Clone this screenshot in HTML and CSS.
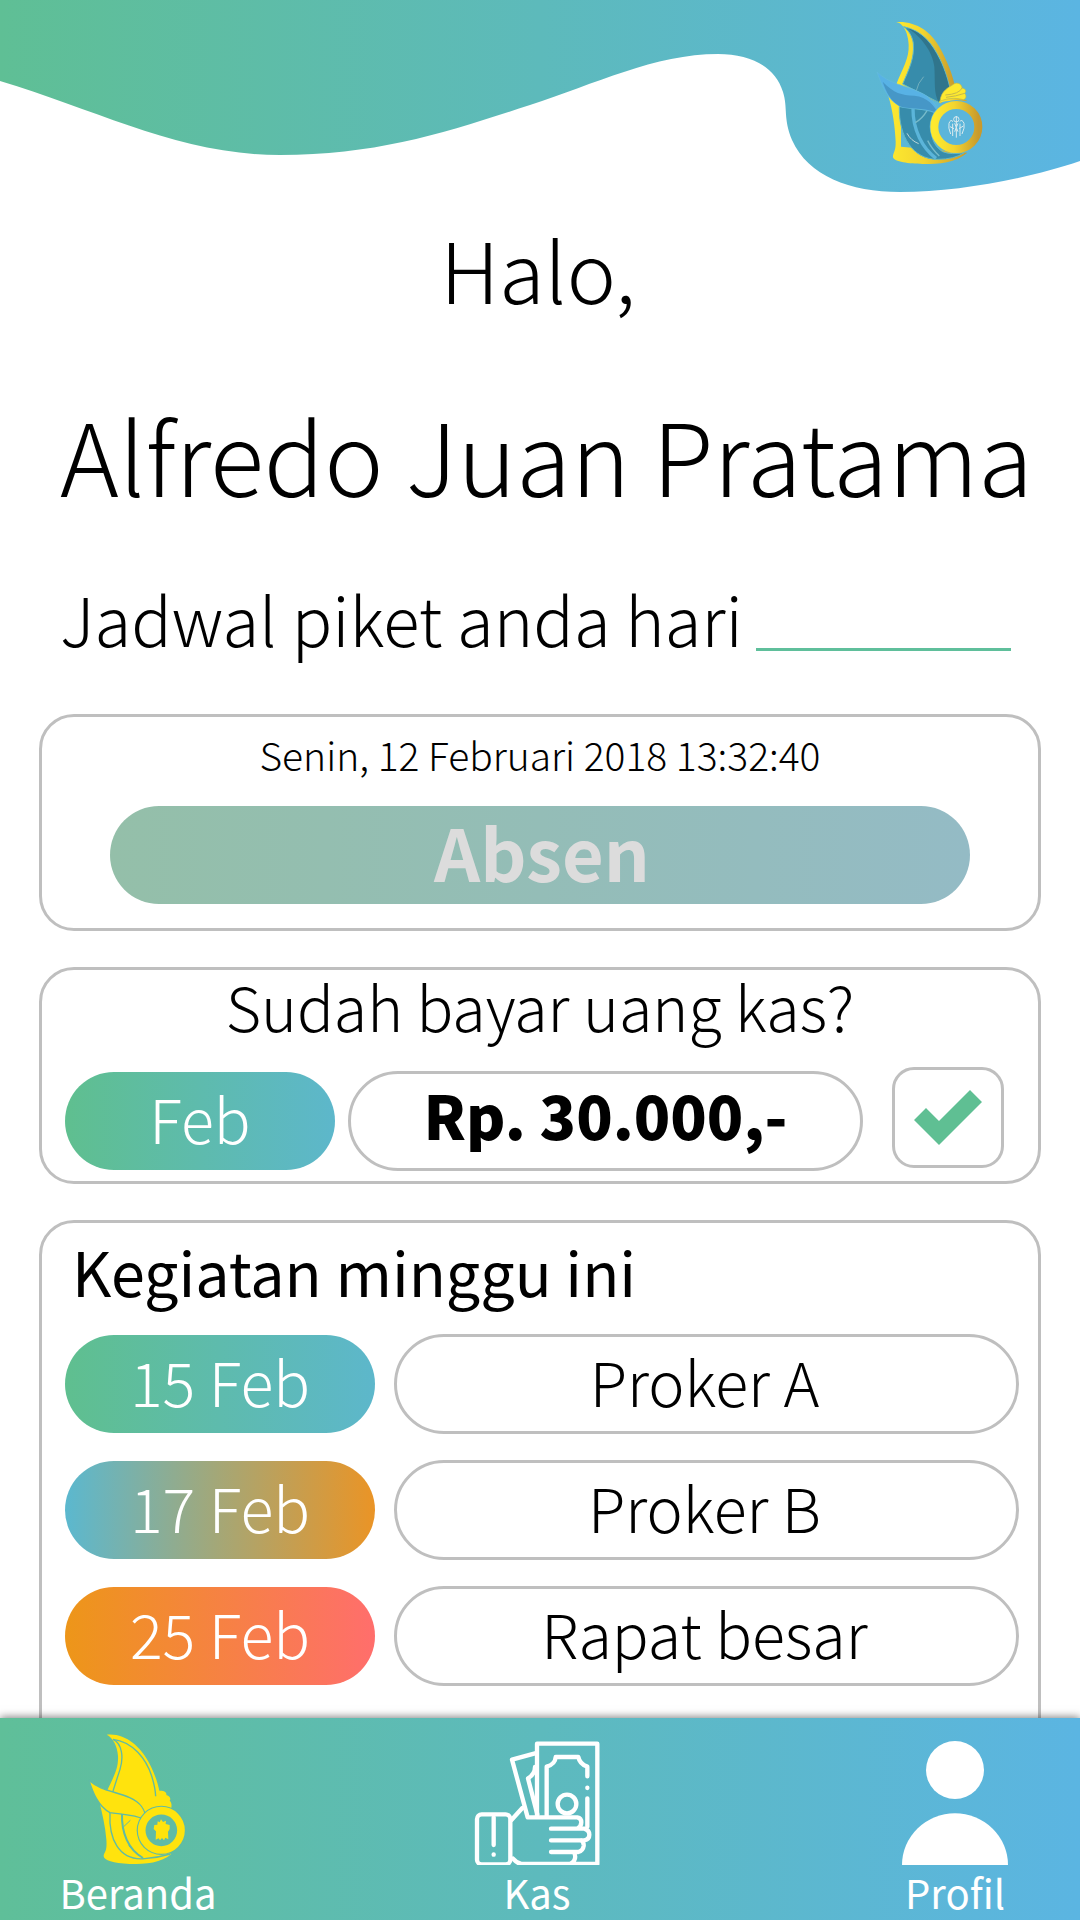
FILE: index.html
```html
<!DOCTYPE html>
<html lang="id">
<head>
<meta charset="utf-8">
<meta name="viewport" content="width=device-width, initial-scale=1">
<title>Beranda</title>
<link rel="stylesheet" href="styles.css">
</head>
<body>
<div class="app">
  <main class="content">
    <header class="hero">
      <svg class="hero-wave" viewBox="0 0 1080 193" preserveAspectRatio="none" aria-hidden="true">
        <defs>
          <linearGradient id="wave" x1="0" x2="1" y1="0" y2="0">
            <stop offset="0" stop-color="#5fbf95"/>
            <stop offset="0.5" stop-color="#5dbabb"/>
            <stop offset="1" stop-color="#5bb5e2"/>
          </linearGradient>
        </defs>
        <path fill="url(#wave)" d="M0 0H1080V161C1030 178 960 192 900 192C850 192 808 176 792 140C783 118 788 108 783 92C775 66 750 54 718 54C655 54 595 84 530 105C450 131 380 155 280 155C180 155 100 111 0 81Z"/>
      </svg>
      <svg class="hero-logo" viewBox="50 60 324 435" role="img" aria-label="Logo">
        <defs>
          <linearGradient id="gold" x1="0" x2="1" y1="0" y2="0">
            <stop offset="0" stop-color="#fde92f"/>
            <stop offset="0.45" stop-color="#f3d52f"/>
            <stop offset="1" stop-color="#c89a2c"/>
          </linearGradient>
        </defs>
        <path fill="url(#gold)" d="M110 66C170 62 215 95 240 140C265 185 280 225 288 262L275 280L245 310L110 255C130 205 150 175 148 135C147 110 140 90 130 78C125 71 118 68 110 66Z"/>
        <path fill="#378cab" stroke="#62b9c8" stroke-width="3" d="M133 80C190 92 218 130 242 178C258 212 267 245 272 268L240 308L130 252C148 210 166 175 162 130C159 108 147 90 133 80Z"/>
        <path fill="#30758c" d="M146 85C190 98 220 135 241 180C257 213 266 243 271 267L240 307C222 285 228 245 225 200C220 155 185 110 146 85Z"/>
        <path fill="none" stroke="#8fbfc5" stroke-width="2" d="M193 230Q175 250 171 272"/>
        <path fill="url(#gold)" d="M87 288L125 300V440L324 458C290 488 240 492 190 492C150 491 104 486 101 472C100 458 110 455 109 425C107 380 100 330 87 288Z"/>
        <path fill="#378cab" stroke="#62b9c8" stroke-width="3" d="M120 320L240 335C205 375 210 430 250 455Q275 465 315 458Q285 478 235 478C160 478 118 410 120 320Z"/>
        <path fill="none" stroke="#5bb5da" stroke-width="10" d="M161 325C160 390 190 445 230 475"/>
        <path fill="none" stroke="#77bbca" stroke-width="4" d="M168 368Q190 355 203 332M205 422Q218 448 240 468"/>
        <path fill="none" stroke="#b9d5d8" stroke-width="3" d="M143 400Q155 422 178 431"/>
        <path fill="#58b2e5" stroke="#63bbdd" stroke-width="2" d="M53 216C90 252 135 255 180 276C215 290 235 318 240 345C205 325 165 328 130 322C85 305 68 258 53 216Z"/>
        <path fill="#4697c7" d="M70 245C105 280 125 285 165 287C205 290 225 318 238 342C205 323 165 328 130 322C95 308 80 275 70 245Z"/>
        <path fill="url(#gold)" d="M240 303Q290 283 325 303Q255 300 240 309Z"/>
        <path fill="#fde92f" stroke="#b9b650" stroke-width="2" d="M242 304C245 270 270 262 282 253C296 243 309 256 308 264C322 266 321 277 316 280C323 288 320 298 312 299C285 292 263 295 242 304Z"/>
        <path fill="none" stroke="#c6b94b" stroke-width="3" d="M308 264Q300 282 258 285M316 280Q290 289 260 292"/>
        <circle cx="291" cy="380" r="80" fill="#5bb5da"/>
        <circle cx="291" cy="381" r="66" fill="none" stroke="url(#gold)" stroke-width="24"/>
        <g fill="none" stroke="#dcebee" stroke-width="3">
          <circle cx="291" cy="358" r="8"/>
          <path d="M291 348V413M281 365Q274 356 269 370Q266 383 274 402M301 365Q308 356 314 370Q317 383 308 402M280 371V408M302 371V408M272 380L284 386M299 386L312 378M286 370L296 395M296 370L286 395"/>
        </g>
      </svg>
    </header>

    <section class="greeting">
      <p class="hello">Halo,</p>
      <h1 class="name">Alfredo Juan Pratama</h1>
      <p class="duty"><label for="hari">Jadwal piket anda hari</label><input class="duty-day" id="hari" type="text"></p>
    </section>

    <div class="cards">
      <section class="card attendance">
        <time class="clock" datetime="2018-02-12T13:32:40">Senin, 12 Februari 2018 13:32:40</time>
        <button class="absen" type="button" disabled>Absen</button>
      </section>

      <section class="card dues">
        <h2 class="question">Sudah bayar uang kas?</h2>
        <div class="dues-row">
          <span class="pill green">Feb</span>
          <span class="outline amount">Rp. 30.000,-</span>
          <label class="paid">
            <input class="paid-box" type="checkbox" checked aria-label="Sudah bayar">
            <svg class="paid-tick" viewBox="0 0 68 55" aria-hidden="true"><path fill="#5fbf93" d="M0 30L12 18L25 31L56 0L68 12L25 55Z"/></svg>
          </label>
        </div>
      </section>

      <section class="card agenda">
        <h2 class="agenda-title">Kegiatan minggu ini</h2>
        <ul class="agenda-list">
          <li class="agenda-row"><span class="pill green">15 Feb</span><span class="outline">Proker A</span></li>
          <li class="agenda-row"><span class="pill amber">17 Feb</span><span class="outline">Proker B</span></li>
          <li class="agenda-row"><span class="pill coral">25 Feb</span><span class="outline">Rapat besar</span></li>
        </ul>
      </section>
    </div>
  </main>

  <nav class="tabs">
    <a class="tab" href="#beranda">
      <svg class="tab-icon" viewBox="70 66 390 396" aria-hidden="true">
        <g fill="#ffe30d">
          <path d="M171 71C225 65 272 105 298 155C317 190 325 220 329 239C344 238 352 244 350 252C362 255 364 264 360 269C368 276 365 285 365 292L300 310L172 240C190 200 207 175 205 135C203 105 190 80 171 71Z"/>
          <path d="M150 275L300 310L340 420L365 429C335 456 290 459 240 459C190 457 163 448 162 436C164 420 173 425 170 385C167 345 158 310 150 275Z"/>
        </g>
        <g fill="none" stroke="#60bba5" stroke-width="4">
          <path d="M190 85C218 98 222 140 211 175Q198 215 187 250"/>
          <path d="M190 85C250 92 290 145 306 195Q317 230 318 256"/>
          <path d="M181 305C177 380 205 450 285 443Q325 440 362 429"/>
          <path d="M217 307C215 365 235 415 280 441" stroke-width="6"/>
          <path d="M221 348L242 328M237 404Q250 420 273 436" stroke-width="3"/>
        </g>
        <path fill="#ffe30d" stroke="#60bba5" stroke-width="4" d="M118 208C150 238 200 242 240 260C275 275 287 297 290 327C255 310 220 310 181 305C145 285 130 245 118 208Z"/>
        <circle cx="335" cy="358" r="74" fill="#60bba5"/>
        <circle cx="335" cy="358" r="59" fill="none" stroke="#ffe30d" stroke-width="23"/>
        <path fill="#ffe30d" d="M324 331L330 334L334 325L340 333L349 329L348 339L360 342V354L355 362L356 385L347 380L343 388L337 381L331 388L327 382L318 386L319 361L312 354L314 342L323 341Z"/>
      </svg>
      <span class="tab-label">Beranda</span>
    </a>
    <a class="tab" href="#kas">
      <svg class="tab-icon" viewBox="67 66 390 396" aria-hidden="true">
        <g transform="translate(0 -3)" fill="none" stroke="#fff" stroke-width="13" stroke-linejoin="round" stroke-linecap="round">
          <rect x="82" y="313" width="100" height="150" rx="14"/>
          <path d="M132 322V405M132 433V434"/>
          <path d="M262 320V101H443V462H215Q202 460 190 446M186 329L218 294"/>
          <path d="M256 130L187 149L234 322H383Q395 324 395 337Q395 349 383 356H304M383 356H404Q419 361 419 374Q419 388 404 391H304M395 391Q403 396 402 408Q400 422 386 426H304M372 426Q378 434 376 445Q374 457 362 462"/>
          <path d="M256 171Q256 193 235 205L263 313M291 320V170Q317 162 318 141H386Q390 162 413 170V199M413 233V234M413 265V350"/>
          <circle cx="352" cy="282" r="28"/>
        </g>
      </svg>
      <span class="tab-label">Kas</span>
    </a>
    <a class="tab" href="#profil">
      <svg class="tab-icon" viewBox="63 66 390 396" aria-hidden="true">
        <g fill="#fff" transform="translate(0 -1)"><circle cx="258" cy="178" r="87"/><path d="M99 463A159 155 0 0 1 417 463Z"/></g>
      </svg>
      <span class="tab-label">Profil</span>
    </a>
  </nav>
</div>
</body>
</html>
```
FILE: styles.css
```css
* {
  box-sizing: border-box;
}

body {
  margin: 0;
  background: #fff;
  color: #000;
  font-family: "Noto Sans CJK JP", "Noto Sans", sans-serif;
  font-weight: 300;
}

h1,
h2,
p,
ul {
  margin: 0;
  padding: 0;
  font-weight: inherit;
}

input,
button {
  margin: 0;
  padding: 0;
  border: 0;
  font: inherit;
}

.app {
  display: flex;
  flex-direction: column;
  height: 100vh;
}

.content {
  flex: 1;
  min-height: 0;
  overflow-y: auto;
  scrollbar-width: none;
}

/* Header wave */
.hero {
  display: flex;
  justify-content: flex-end;
  position: relative;
  height: 193px;
  padding: 20px 96px 0 0;
}

.hero-wave {
  position: absolute;
  inset: 0;
  width: 100%;
  height: 100%;
}

.hero-logo {
  position: relative;
  width: 108px;
  height: 145px;
}

/* Greeting */
.greeting {
  padding: 15px 64px 0 60px;
  white-space: nowrap;
}

.hello {
  font-size: 83px;
  line-height: 120px;
  text-align: center;
}

.name {
  margin-top: 56px;
  font-size: 100px;
  line-height: 140px;
  text-align: center;
}

.duty {
  display: flex;
  align-items: flex-end;
  gap: 13px;
  margin-top: 44px;
  font-size: 67px;
  line-height: 100px;
}

.duty-day {
  flex: 1;
  min-width: 0;
  height: 80px;
  margin: 0 5px 17px 0;
  border-bottom: 3px solid #5fbf9b;
  background: none;
}

/* Cards */
.cards {
  display: grid;
  gap: 36px;
  padding: 46px 39px 0;
}

.card {
  border: 3px solid #bfbfbf;
  border-radius: 35px;
}

.attendance {
  display: flex;
  flex-direction: column;
  gap: 22px;
  height: 217px;
  padding: 7px 68px;
}

.clock {
  font-size: 39px;
  line-height: 60px;
  text-align: center;
}

.absen {
  height: 98px;
  padding: 0 0 8px 4px;
  border-radius: 49px;
  background: linear-gradient(90deg, #94bfa9, #94bbc5);
  color: #dcdcdc;
  font-size: 72px;
  font-weight: 700;
  line-height: 90px;
}

.dues {
  height: 217px;
  padding: 0 34px 0 23px;
}

.question {
  padding: 0 0 25px 11px;
  font-size: 61px;
  line-height: 72px;
  text-align: center;
}

.dues-row {
  display: grid;
  grid-template-columns: 270fr 531fr 112px;
  align-items: center;
  column-gap: 13px;
}

.pill,
.outline {
  display: flex;
  align-items: center;
  justify-content: center;
  height: 98px;
  border-radius: 51px;
  color: #fff;
  font-size: 61px;
  line-height: 90px;
  padding-bottom: 6px;
}

.outline {
  height: 100px;
  padding-right: 4px;
  border: 3px solid #bfbfbf;
  color: #000;
}

.green {
  background: linear-gradient(90deg, #5fbf8f, #5db7cb);
}

.amber {
  background: linear-gradient(90deg, #5bb8cf, #a5a776 50%, #ea9426);
}

.coral {
  background: linear-gradient(90deg, #ed9619, #ff6e6c);
}

.amount {
  margin-right: 16px;
  padding: 0 0 14px;
  font-size: 60px;
  font-weight: 900;
}

.paid {
  display: grid;
  place-items: center;
  height: 101px;
  margin-bottom: 6px;
}

.paid-box,
.paid-tick {
  grid-area: 1 / 1;
}

.paid-box {
  width: 100%;
  height: 100%;
  border: 3px solid #bfbfbf;
  border-radius: 22px;
  appearance: none;
}

.paid-tick {
  width: 68px;
  height: 55px;
  pointer-events: none;
  visibility: hidden;
}

.paid-box:checked + .paid-tick {
  visibility: visible;
}

.agenda {
  min-height: 700px;
  padding: 7px 19px 0 23px;
}

.agenda-title {
  padding: 0 7px 22px;
  font-size: 61px;
  font-weight: 400;
  line-height: 82px;
}

.agenda-list {
  display: grid;
  gap: 26px;
  list-style: none;
}

.agenda-row {
  display: grid;
  grid-template-columns: 310fr 625fr;
  align-items: center;
  gap: 19px;
}

/* Bottom tabs */
.tabs {
  display: grid;
  grid-template-columns: 212fr 586fr 250fr;
  position: relative;
  height: 202px;
  padding: 15px 0 0 32px;
  background: linear-gradient(90deg, #5fbf99, #5dbabd 50%, #5bb5e2);
  box-shadow: 0 -1px 8px rgba(0, 0, 0, 0.5);
}

.tab {
  display: flex;
  flex-direction: column;
  align-items: center;
  color: #fff;
  text-decoration: none;
}

.tab-icon {
  width: 130px;
  height: 132px;
}

.tab-label {
  font-size: 40px;
  font-weight: 400;
  line-height: 54px;
}
```
